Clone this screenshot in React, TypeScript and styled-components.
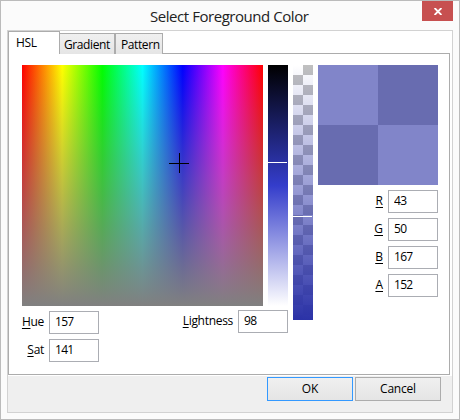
import React from 'react';
import styled, { createGlobalStyle } from 'styled-components';

const GlobalStyle = createGlobalStyle`
  * { box-sizing: border-box; }
  body { margin: 0; background: #fbfbfb; }
`;

const Dialog = styled.div`
  width: 460px;
  height: 420px;
  border: 1px solid #bbbbbb;
  background: #fbfbfb;
  color: #000;
  font: 12px/16px "Open Sans", "Noto Sans", sans-serif;
  padding: 0 6px 6px;
  display: flex;
  flex-direction: column;
  white-space: nowrap;
`;

const TitleBar = styled.header`
  height: 29px;
  display: flex;
  flex: none;
  justify-content: flex-end;
`;

const Title = styled.h1`
  flex: 1;
  margin: 0;
  padding: 5px 0 0 143px;
  font-size: 15px;
  line-height: 20px;
  font-weight: 400;
  letter-spacing: -0.45px;
  color: #222;
`;

const CloseButton = styled.button`
  width: 31px;
  height: 20px;
  padding: 1px 0 0 1px;
  border: 0;
  background: #c75050;
  display: flex;
  align-items: center;
  justify-content: center;
`;

const Client = styled.main`
  height: 383px;
  border: 1px solid #d2d2d2;
  background: #efefef;
  display: flex;
  flex-direction: column;
`;

const TabArea = styled.div`
  height: 345px;
  background: #fff;
  padding-right: 2px;
`;

const TabList = styled.div`
  height: 22px;
  display: flex;
  align-items: flex-start;
`;

const Tab = styled.button<{ $active?: boolean; $width: number; $spacing?: number }>`
  position: relative;
  width: ${p => p.$width}px;
  height: ${p => (p.$active ? 23 : 21)}px;
  margin: ${p => (p.$active ? 0 : '2px 0 0')};
  padding: ${p => (p.$active ? '2px 0 0 7px' : '2px 0 0 4px')};
  border: 1px solid #acacac;
  border-bottom: 0;
  background: ${p => (p.$active ? '#fff' : 'linear-gradient(#f0f0f0, #e5e5e5)')};
  font: inherit;
  letter-spacing: ${p => p.$spacing ?? 0}px;
  line-height: 17px;
  display: flex;
  color: #000;

  &:nth-child(2) { border-left: 0; }
  &:nth-child(3) { padding-left: 5px; }
`;

const Panel = styled.section`
  height: 322px;
  border: 1px solid #acacac;
  padding: 11px 11px 0 13px;
  display: flex;
  align-items: flex-start;
`;

const Pickers = styled.div`
  width: 266px;
  margin-right: 5px;
`;

const PickerRow = styled.div`
  display: flex;
  gap: 5px;
`;

const HueMap = styled.div`
  width: 241px;
  height: 241px;
  background:
    linear-gradient(rgba(128, 128, 128, 0), #808080),
    linear-gradient(90deg, #f00, #ff0, #0f0, #0ff, #00f, #f0f, #f00);
  position: relative;
`;

const Crosshair = styled.svg`
  position: absolute;
  left: 147px;
  top: 88px;
`;

const LightnessBar = styled.div`
  width: 20px;
  height: 241px;
  position: relative;
  background: linear-gradient(#000, #343dcb 50%, #fff);
`;

const AlphaBar = styled.div`
  width: 20px;
  height: 255px;
  margin-right: 5px;
  position: relative;
  background:
    linear-gradient(rgba(43, 50, 167, 0), rgb(43, 50, 167)),
    repeating-conic-gradient(#c0c0c0 0 25%, #fff 0 50%) 0 0 / 20px 20px;
`;

const Marker = styled.div<{ $at: number }>`
  position: absolute;
  left: 0;
  top: ${p => p.$at}px;
  width: 19px;
  height: 1px;
  background: #fff;
`;

const FieldRow = styled.div`
  display: flex;
  align-items: flex-start;
  justify-content: space-between;
  padding-top: 4px;
`;

const FieldStack = styled.div<{ $top?: number; $width?: number }>`
  width: ${p => (p.$width ? `${p.$width}px` : 'auto')};
  display: flex;
  flex-direction: column;
  align-items: flex-end;
  gap: 5px;
  padding-top: ${p => p.$top ?? 0}px;
`;

const FieldLabel = styled.label<{ $spacing?: number }>`
  display: flex;
  gap: 5px;
  line-height: 22px;

  > span { letter-spacing: ${p => p.$spacing ?? 0}px; }
  u { text-underline-offset: 2px; text-decoration-thickness: 1px; text-decoration-skip-ink: none; }
`;

const Input = styled.input`
  width: 50px;
  height: 23px;
  border: 1px solid #abadb3;
  background: #fff;
  padding: 0 0 2px 5px;
  font: inherit;
  letter-spacing: -0.7px;
  color: #000;
  outline: 0;
`;

const ColorColumn = styled.div`
  width: 120px;
`;

const Swatch = styled.div`
  height: 120px;
  background: repeating-conic-gradient(#686cb0 0 25%, #8185c9 0 50%);
`;

const Actions = styled.footer`
  display: flex;
  gap: 2px;
  justify-content: flex-end;
  padding: 1px 11px 0 0;
`;

const Button = styled.button<{ $primary?: boolean }>`
  width: 86px;
  height: 24px;
  border: 1px solid ${p => (p.$primary ? '#3399ff' : '#acacac')};
  background: linear-gradient(#f0f0f0, #e5e5e5);
  padding: 0 0 1px;
  font: inherit;
  letter-spacing: -0.2px;
  color: #000;
`;

type FieldProps = { text: string; value: string; spacing?: number };

const Field = ({ text, value, spacing }: FieldProps) => (
  <FieldLabel $spacing={spacing}>
    <span><u>{text[0]}</u>{text.slice(1)}</span>
    <Input defaultValue={value} />
  </FieldLabel>
);

export default function App() {
  return (
    <>
      <GlobalStyle />
      <Dialog role="dialog">
        <TitleBar>
          <Title>Select Foreground Color</Title>
          <CloseButton aria-label="Close">
            <svg width="8" height="7" viewBox="0 0 8 7">
              <path d="M.6 0 7.4 7M7.4 0 .6 7" stroke="#fff" strokeWidth="1.8" />
            </svg>
          </CloseButton>
        </TitleBar>
        <Client>
          <TabArea>
            <TabList>
              <Tab $active $width={52} $spacing={-0.3}>HSL</Tab>
              <Tab $width={55} $spacing={-0.4}>Gradient</Tab>
              <Tab $width={48} $spacing={-0.4}>Pattern</Tab>
            </TabList>
            <Panel>
              <Pickers>
                <PickerRow>
                  <HueMap>
                    <Crosshair width="20" height="20" shapeRendering="crispEdges">
                      <path d="M0 10.5h20M10.5 0v20" stroke="#000" />
                    </Crosshair>
                  </HueMap>
                  <LightnessBar><Marker $at={97} /></LightnessBar>
                </PickerRow>
                <FieldRow>
                  <FieldStack $top={1} $width={77}>
                    <Field text="Hue" value="157" spacing={-0.3} />
                    <Field text="Sat" value="141" spacing={-0.3} />
                  </FieldStack>
                  <Field text="Lightness" value="98" spacing={-0.3} />
                </FieldRow>
              </Pickers>
              <AlphaBar><Marker $at={151} /></AlphaBar>
              <ColorColumn>
                <Swatch />
                <FieldStack $top={5}>
                  <Field text="R" value="43" />
                  <Field text="G" value="50" />
                  <Field text="B" value="167" />
                  <Field text="A" value="152" />
                </FieldStack>
              </ColorColumn>
            </Panel>
          </TabArea>
          <Actions>
            <Button $primary>OK</Button>
            <Button>Cancel</Button>
          </Actions>
        </Client>
      </Dialog>
    </>
  );
}
